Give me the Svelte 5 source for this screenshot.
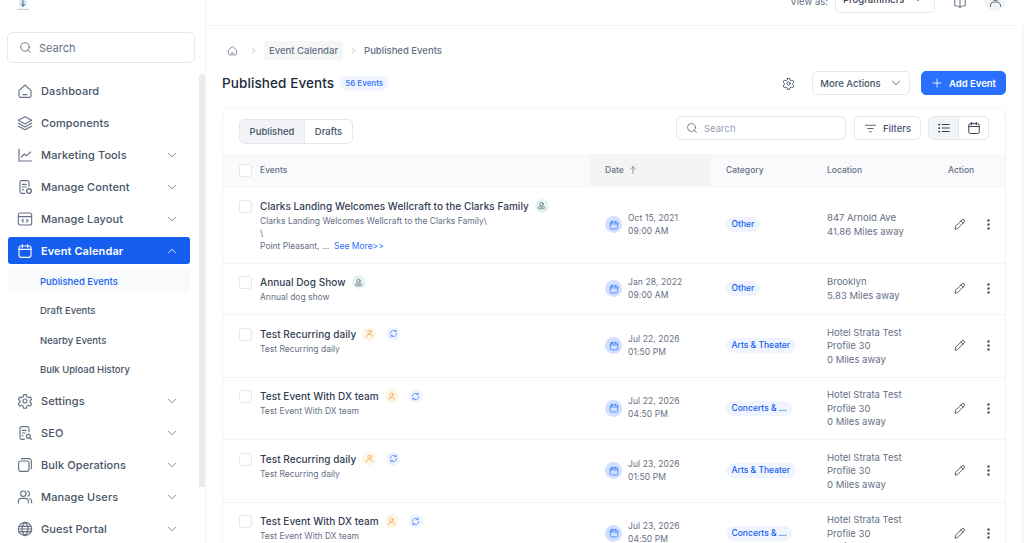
<script lang="ts">
	const nav = [
		{ label: 'Dashboard', icon: 'home' },
		{ label: 'Components', icon: 'layers' },
		{ label: 'Marketing Tools', icon: 'chart', more: true },
		{ label: 'Manage Content', icon: 'content', more: true },
		{ label: 'Manage Layout', icon: 'layout', more: true },
		{ label: 'Event Calendar', icon: 'calendar', more: true, active: true },
	];
	const sub = ['Published Events', 'Draft Events', 'Nearby Events', 'Bulk Upload History'];
	const nav2 = [
		{ label: 'Settings', icon: 'gear' },
		{ label: 'SEO', icon: 'seo' },
		{ label: 'Bulk Operations', icon: 'copy' },
		{ label: 'Manage Users', icon: 'users' },
		{ label: 'Guest Portal', icon: 'globe' },
	];
	const events = [
		{ title: 'Clarks Landing Welcomes Wellcraft to the Clarks Family', desc: ['Clarks Landing Welcomes Wellcraft to the Clarks Family\\', '\\'], more: 'Point Pleasant, ...', badge: 'guest', date: 'Oct 15, 2021', time: '09:00 AM', cat: 'Other', loc: ['847 Arnold Ave', '41.86 Miles away'] },
		{ title: 'Annual Dog Show', desc: ['Annual dog show'], badge: 'guest', date: 'Jan 28, 2022', time: '09:00 AM', cat: 'Other', loc: ['Brooklyn', '5.83 Miles away'] },
		{ title: 'Test Recurring daily', desc: ['Test Recurring daily'], badge: 'user', sync: true, date: 'Jul 22, 2026', time: '01:50 PM', cat: 'Arts & Theater', loc: ['Hotel Strata Test', 'Profile 30', '0 Miles away'] },
		{ title: 'Test Event With DX team', desc: ['Test Event With DX team'], badge: 'user', sync: true, date: 'Jul 22, 2026', time: '04:50 PM', cat: 'Concerts & ...', loc: ['Hotel Strata Test', 'Profile 30', '0 Miles away'] },
		{ title: 'Test Recurring daily', desc: ['Test Recurring daily'], badge: 'user', sync: true, date: 'Jul 23, 2026', time: '01:50 PM', cat: 'Arts & Theater', loc: ['Hotel Strata Test', 'Profile 30', '0 Miles away'] },
		{ title: 'Test Event With DX team', desc: ['Test Event With DX team'], badge: 'user', sync: true, date: 'Jul 23, 2026', time: '04:50 PM', cat: 'Concerts & ...', loc: ['Hotel Strata Test', 'Profile 30', '0 Miles away'] },
	];
</script>

{#snippet icon(name, size = 16)}
	<svg width={size} height={size} viewBox="0 0 24 24" fill="none" stroke="currentColor" stroke-width="1.7" stroke-linecap="round" stroke-linejoin="round">
		{#if name === 'home'}
			<path d="M3 11.5 12 3l9 8.5V19a2.5 2.5 0 0 1-2.5 2.5h-13A2.5 2.5 0 0 1 3 19z" /><path d="M9 17.5h6" />
		{:else if name === 'layers'}
			<path d="M12 2.5 22 8l-10 5.5L2 8z" /><path d="m2 12.5 10 5.5 10-5.5" /><path d="m2 17 10 5 10-5" />
		{:else if name === 'chart'}
			<path d="M3 3v18h19" /><path d="m6.5 15 4.5-4.5 3.5 2.5 6-5.5" />
		{:else if name === 'content'}
			<path d="M18 11V5a2.5 2.5 0 0 0-2.500-2.500H7A2.500 2.500 0 0 0 4.500 5v14A2.500 2.500 0 0 0 7 21.500h5" /><path d="M8 8h6M8 12h6M8 16h2" /><circle cx="18" cy="18" r="3.500" stroke-dasharray="2 1" stroke-width="2.200" />
		{:else if name === 'layout'}
			<rect x="2" y="3" width="20" height="18" rx="3" /><path d="M2 8.500h20" /><path d="m9.500 12.500-2 2 2 2M14.500 12.500l2 2-2 2" />
		{:else if name === 'calendar'}
			<rect x="3" y="4.500" width="18" height="17" rx="3" /><path d="M3 9.500h18M8 2.500v4M16 2.500v4" />
		{:else if name === 'gear'}
			<circle cx="12" cy="12" r="3" /><path d="M10 2.500h4l.6 3 2.500 1.400 2.900-1 2 3.400-2.300 2 0 2.800 2.300 2-2 3.400-2.900-1-2.500 1.400-.6 3h-4l-.6-3-2.500-1.400-2.900 1-2-3.400 2.300-2v-2.800l-2.300-2 2-3.400 2.900 1L9.400 5.500z" />
		{:else if name === 'seo'}
			<path d="M18 10V5a2.500 2.500 0 0 0-2.500-2.500H7A2.500 2.500 0 0 0 4.500 5v14A2.500 2.500 0 0 0 7 21.500h4" /><path d="M8 8h6M8 12h4M8 16h1" /><circle cx="17" cy="17" r="3" /><path d="m19.500 19.500 2 2" />
		{:else if name === 'copy'}
			<rect x="2.500" y="6" width="15.500" height="15.500" rx="3" /><path d="M6.500 2.500H18a3.500 3.500 0 0 1 3.500 3.500v11.500" />
		{:else if name === 'users'}
			<circle cx="9.500" cy="7" r="4" /><path d="M2 21v-2a5 5 0 0 1 5-5h5a5 5 0 0 1 5 5v2" /><path d="M16 3.200a4 4 0 0 1 0 7.600M19 14.300a5 5 0 0 1 3 4.700v2" />
		{:else if name === 'globe'}
			<circle cx="12" cy="12" r="10" /><path d="M2 12h20M2.800 8h18.400M2.800 16h18.400" /><path d="M12 2c-6 5.500-6 14.500 0 20M12 2c6 5.500 6 14.500 0 20" />
		{:else if name === 'search'}
			<circle cx="11" cy="11" r="8" /><path d="m21 21-4.300-4.300" />
		{:else if name === 'down'}
			<path d="m5 8.500 7 7 7-7" />
		{:else if name === 'up'}
			<path d="m5 15.500 7-7 7 7" />
		{:else if name === 'right'}
			<path d="m8.500 5 7 7-7 7" />
		{:else if name === 'book'}
			<path d="M12 6.500C10 4.500 7 3.500 3 3.500v15c4 0 7 1 9 3 2-2 5-3 9-3v-15c-4 0-7 1-9 3z" /><path d="M12 6.500v15" />
		{:else if name === 'person'}
			<circle cx="12" cy="7.500" r="4.500" /><path d="M4 21.500v-1a6 6 0 0 1 6-6h4a6 6 0 0 1 6 6v1" />
		{:else if name === 'plus'}
			<path d="M12 4v16M4 12h16" />
		{:else if name === 'filter'}
			<path d="M3 6h18M7 12h10M10.500 18h3" />
		{:else if name === 'list'}
			<path d="M9 6h12M9 12h12M9 18h12" /><path d="M3.500 6h.5M3.500 12h.5M3.500 18h.5" stroke-width="3" />
		{:else if name === 'arrowup'}
			<path d="M12 20V4M6 10l6-6 6 6" />
		{:else if name === 'pencil'}
			<path d="M4 20l1-5L16.500 3.500a2.800 2.800 0 0 1 4 4L9 19z" /><path d="m14.500 5.500 4 4" />
		{:else if name === 'guest'}
			<circle cx="12" cy="8" r="4.500" /><path d="M8 14c-3 .5-5 2-5 4 0 2 3 3 9 3s9-1 9-3c0-2-2-3.500-5-4" /><path d="M9 16.500h6" />
		{:else if name === 'sync'}
			<path d="M20.500 12a8.500 8.500 0 0 1-15 5.500" /><path d="M3.500 12a8.500 8.500 0 0 1 15-5.500" /><path d="M19 2.500v4.500h-4.500M5 21.500V17h4.500" />
		{/if}
	</svg>
{/snippet}

<div class="shell">
	<aside class="sidebar">
		<div class="logo">
			<svg width="14" height="10" viewBox="0 0 14 10" fill="none">
				<circle cx="7" cy="3" r="4" fill="#dbe7f3" />
				<path d="M7 0v7M5 4c.5 1.500 3.500 1.500 4 0" stroke="#3b6ea5" stroke-width="1" />
				<path d="M1 9.300h12" stroke="#b4bac4" stroke-width=".8" />
			</svg>
		</div>
		<div class="side-search">
			<span class="search-ic">{@render icon('search', 13)}</span>
			<span>Search</span>
		</div>
		<div class="side-body">
			<nav class="nav">
				{#each nav as item}
					<div class="nav-item" class:active={item.active}>
						<span class="nav-ic">{@render icon(item.icon, 16)}</span>
						<span class="nav-label">{item.label}</span>
						{#if item.more}<span class="nav-chev">{@render icon(item.active ? 'up' : 'down', 12)}</span>{/if}
					</div>
				{/each}
				<div class="sub-list">
					{#each sub as s, i}
						<div class="sub-item" class:current={i === 0}>{s}</div>
					{/each}
				</div>
				{#each nav2 as item}
					<div class="nav-item">
						<span class="nav-ic">{@render icon(item.icon, 16)}</span>
						<span class="nav-label">{item.label}</span>
						<span class="nav-chev">{@render icon('down', 12)}</span>
					</div>
				{/each}
			</nav>
			<div class="side-scroll"></div>
		</div>
	</aside>

	<div class="right">
		<header class="topbar">
			<span class="view-as">View as:</span>
			<div class="select"><span>Programmers</span>{@render icon('down', 12)}</div>
			<span class="book">{@render icon('book', 14)}</span>
			<span class="avatar">{@render icon('person', 15)}</span>
		</header>

		<main class="main">
			<div class="crumbs">
				<span class="crumb-home">{@render icon('home', 11)}</span>
				<span class="crumb-sep">{@render icon('right', 9)}</span>
				<span class="crumb-chip">Event Calendar</span>
				<span class="crumb-sep">{@render icon('right', 9)}</span>
				<span class="crumb-last">Published Events</span>
			</div>

			<div class="title-row">
				<h1>Published Events</h1>
				<span class="count">56 Events</span>
				<span class="title-gear">{@render icon('gear', 13)}</span>
				<button class="btn more-btn">More Actions {@render icon('down', 12)}</button>
				<button class="btn add-btn">{@render icon('plus', 12)} Add Event</button>
			</div>

			<section class="card">
				<div class="toolbar">
					<div class="tabs">
						<span class="tab on">Published</span>
						<span class="tab">Drafts</span>
					</div>
					<div class="tool-search">
						<span class="search-ic">{@render icon('search', 12)}</span>
						<span>Search</span>
					</div>
					<button class="btn filter-btn">{@render icon('filter', 13)} Filters</button>
					<div class="view-toggle">
						<span class="view on">{@render icon('list', 14)}</span>
						<span class="view">{@render icon('calendar', 14)}</span>
					</div>
				</div>

				<div class="row head">
					<div class="cell ev"><span class="check"></span>Events</div>
					<div class="cell date-head">Date {@render icon('arrowup', 10)}</div>
					<div class="cell">Category</div>
					<div class="cell">Location</div>
					<div class="cell action-head">Action</div>
				</div>

				{#each events as e}
					<div class="row">
						<div class="ev-cell">
							<span class="check"></span>
							<div class="ev-text">
								<div class="ev-title">
									<span>{e.title}</span>
									<span class="badge {e.badge}">{@render icon(e.badge === 'guest' ? 'guest' : 'person', 9)}</span>
									{#if e.sync}<span class="badge sync">{@render icon('sync', 9)}</span>{/if}
								</div>
								{#each e.desc as d}<div class="ev-desc">{d}</div>{/each}
								{#if e.more}<div class="ev-desc">{e.more} &nbsp;<span class="see">See More&gt;&gt;</span></div>{/if}
							</div>
						</div>
						<div class="date-cell">
							<span class="date-ic">{@render icon('calendar', 10)}</span>
							<div class="date-text"><div>{e.date}</div><div>{e.time}</div></div>
						</div>
						<div class="cat-cell"><span class="pill">{e.cat}</span></div>
						<div class="loc-cell">{#each e.loc as l}<div>{l}</div>{/each}</div>
						<div class="act-cell">
							<span class="pen">{@render icon('pencil', 13)}</span>
							<svg width="3" height="11" viewBox="0 0 3 11" fill="#475467"><circle cx="1.500" cy="1.500" r="1.200" /><circle cx="1.500" cy="5.500" r="1.200" /><circle cx="1.500" cy="9.500" r="1.200" /></svg>
						</div>
					</div>
				{/each}
			</section>
		</main>
	</div>
</div>

<style>
	:global(body) { margin: 0; background: #fff; font-family: Inter, "Noto Sans", sans-serif; color: #344054; }
	.shell { display: flex; height: 543px; overflow: hidden; }

	.sidebar { width: 205px; flex-shrink: 0; border-right: 1px solid #f2f4f7; display: flex; flex-direction: column; overflow: hidden; }
	.logo { height: 10px; padding-left: 16px; display: flex; margin-bottom: 22px; }
	.side-search { margin-left: 7px; width: 186px; height: 29px; border: 1px solid #e4e7ec; border-radius: 6px; display: flex; align-items: center; gap: 7px; padding-left: 11px; box-sizing: content-box; width: 175px; font-size: 11px; color: #667085; }
	.search-ic { display: flex; color: #667085; }
	.side-body { display: flex; flex: 1; min-height: 0; margin-top: 11px; position: relative; }
	.nav { width: 200px; padding-top: 3px; }
	.side-scroll { position: absolute; right: 0; top: 0; width: 6px; height: 413px; background: #e9ebef; border-radius: 3px 3px 0 0; }
	.nav-item { display: flex; align-items: center; height: 27px; margin: 0 10px 5px 8px; padding-left: 9px; border-radius: 3px; font-size: 11px; font-weight: 500; color: #475467; letter-spacing: .1px; }
	.nav-item.active { background: #155eef; color: #fff; font-weight: 600; }
	.nav-ic { display: flex; width: 16px; margin-right: 8px; color: #667085; }
	.active .nav-ic { color: #fff; }
	.nav-label { flex: 1; }
	.nav-chev { display: flex; margin-right: 12px; color: #667085; }
	.active .nav-chev { color: #fff; }
	.sub-list { margin: 1px 0 1px; }
	.sub-item { height: 24px; margin: 0 10px 5.500px 8px; padding-left: 32px; display: flex; align-items: center; font-size: 9.500px; font-weight: 500; color: #475467; border-radius: 4px; }
	.sub-item.current { background: #f9fafb; color: #155eef; }

	.right { flex: 1; min-width: 0; display: flex; flex-direction: column; }
	.topbar { height: 26px; flex-shrink: 0; border-bottom: 1px solid #f2f4f7; display: flex; align-items: flex-end; justify-content: flex-end; overflow: hidden; font-size: 9.500px; box-sizing: border-box; }
	.view-as { color: #667085; margin: 0 7px 18px 0; }
	.select { width: 100px; height: 26px; box-sizing: border-box; border: 1px solid #e4e7ec; border-radius: 5px; display: flex; align-items: flex-end; justify-content: space-between; padding: 0 10px 7px 7px; margin-bottom: 12px; color: #344054; font-weight: 500; }
	.book { display: flex; color: #667085; margin: 0 17px 16px 18px; }
	.avatar { width: 22px; height: 22px; background: #f2f4f7; border-radius: 50%; display: flex; align-items: center; justify-content: center; color: #667085; margin: 0 18px 14px 0; }

	.main { flex: 1; min-height: 0; padding: 15px 16px 0 16px; border-right: 2px solid #f5f6f8; overflow: hidden; }
	.crumbs { display: flex; align-items: center; height: 19px; font-size: 9.500px; font-weight: 500; color: #667085; }
	.crumb-home { display: flex; margin: 0 5px; }
	.crumb-sep { display: flex; margin: 0 6px; color: #98a2b3; }
	.crumb-chip { background: #f6f6f7; border-radius: 3px; padding: 4px 5px; line-height: 11px; }

	.title-row { display: flex; align-items: center; height: 24px; margin-top: 11px; }
	h1 { margin: 0; font-size: 13.500px; font-weight: 500; color: #1d2939; letter-spacing: .1px; }
	.count { margin-left: 6px; background: #eff4ff; color: #2970ff; font-size: 8px; font-weight: 500; padding: 2.500px 5px; border-radius: 8px; }
	.title-gear { margin-left: auto; margin-right: 17px; display: flex; color: #475467; }
	.btn { display: flex; align-items: center; justify-content: center; font-family: inherit; font-size: 9.500px; font-weight: 500; height: 24px; box-sizing: border-box; border: 1px solid #e4e7ec; border-radius: 5px; background: #fff; color: #475467; padding: 0; }
	.more-btn { width: 98px; gap: 9px; }
	.add-btn { width: 85px; margin-left: 11px; gap: 6px; background: #2970ff; border-color: #2970ff; color: #fff; font-weight: 600; }

	.card { margin-top: 12px; border: 1px solid #f2f4f7; border-radius: 8px 8px 0 0; }
	.toolbar { display: flex; align-items: flex-start; height: 46px; padding: 8px 16px 0; box-sizing: border-box; }
	.tabs { display: flex; height: 25px; margin-top: 3px; border: 1px solid #e4e7ec; border-radius: 5px; box-sizing: border-box; overflow: hidden; font-size: 9.500px; font-weight: 500; color: #475467; }
	.tab { width: 47px; display: flex; align-items: center; justify-content: center; }
	.tab.on { width: 64px; background: #f2f4f7; border-right: 1px solid #e4e7ec; }
	.tool-search { margin-left: auto; width: 170px; height: 24px; box-sizing: border-box; border: 1px solid #e4e7ec; border-radius: 5px; display: flex; align-items: center; gap: 6px; padding-left: 9px; font-size: 9.500px; color: #98a2b3; }
	.filter-btn { width: 67px; margin-left: 8px; gap: 6px; }
	.view-toggle { display: flex; margin-left: 7px; width: 61px; height: 24px; box-sizing: border-box; border: 1px solid #e4e7ec; border-radius: 5px; overflow: hidden; color: #344054; }
	.view { flex: 1; display: flex; align-items: center; justify-content: center; }
	.view.on { background: #f2f4f7; border-right: 1px solid #e4e7ec; }

	.row { display: grid; grid-template-columns: 366px 122px 101px 121px 1fr; border-bottom: 1px solid #f2f4f7; }
	.head { height: 33px; background: #f9fafb; font-size: 8.500px; font-weight: 500; color: #667085; border-bottom: 1px solid #f2f4f7; box-sizing: border-box; }
	.cell { display: flex; align-items: center; padding-left: 15px; gap: 4px; }
	.cell.ev { padding-left: 16px; gap: 8px; }
	.date-head { background: #f4f4f5; padding-left: 16px; }
	.action-head { padding-left: 15px; }
	.check { width: 13px; height: 13px; box-sizing: border-box; border: 1px solid #e4e7ec; border-radius: 3px; background: #fff; flex-shrink: 0; }

	.ev-cell { display: flex; gap: 8px; padding: 9.500px 0 10.500px 16px; }
	.ev-cell .check { margin-top: 3px; }
	.ev-text { min-width: 0; }
	.ev-title { display: flex; align-items: center; gap: 6px; height: 18px; font-size: 10px; font-weight: 500; color: #344054; letter-spacing: .05px; }
	.ev-desc { font-size: 8.500px; line-height: 12.500px; color: #667085; }
	.see { color: #2970ff; }
	.badge { width: 14px; height: 14px; border-radius: 50%; display: flex; align-items: center; justify-content: center; flex-shrink: 0; }
	.badge.guest { background: #e6f4f1; color: #475467; }
	.badge.user { background: #fef7e6; color: #ef8f3b; }
	.badge.sync { background: #eff4ff; color: #2970ff; margin-left: 4px; }

	.date-cell { display: flex; align-items: center; gap: 6px; padding-left: 16px; }
	.date-ic { width: 17px; height: 17px; border-radius: 50%; background: #d1e0ff; color: #2970ff; display: flex; align-items: center; justify-content: center; flex-shrink: 0; }
	.date-text { font-size: 8.500px; line-height: 13px; color: #667085; letter-spacing: .1px; }

	.cat-cell { display: flex; align-items: center; padding-left: 15px; }
	.pill { background: #eff4ff; color: #155eef; font-size: 8.500px; font-weight: 500; height: 15px; line-height: 15px; padding: 0 5.500px; border-radius: 8px; white-space: nowrap; }

	.loc-cell { display: flex; flex-direction: column; justify-content: center; padding: 10.500px 0 10.500px 15px; font-size: 9.500px; line-height: 13.500px; color: #667085; }

	.act-cell { display: flex; align-items: center; padding-left: 20px; color: #475467; }
	.pen { display: flex; margin-right: 21px; }
</style>
